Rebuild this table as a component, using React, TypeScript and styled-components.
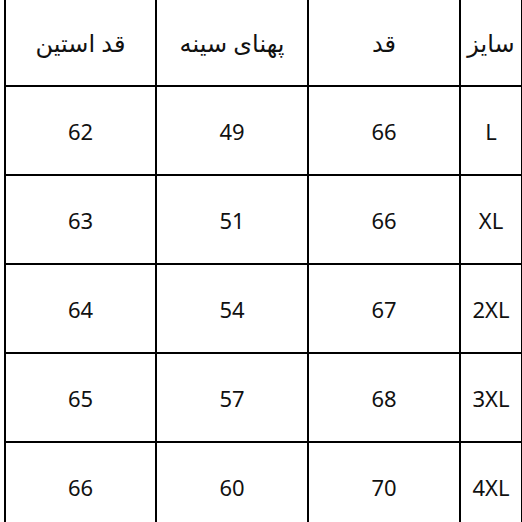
import React from 'react';
import styled, { createGlobalStyle } from 'styled-components';

const GlobalStyle = createGlobalStyle`
  html, body {
    margin: 0;
    padding: 0;
    background: #ffffff;
    overflow: hidden;
  }
`;

const Page = styled.div`
  width: 522px;
  height: 522px;
  overflow: hidden;
  background: #ffffff;
`;

const Table = styled.div`
  direction: rtl;
  display: grid;
  grid-template-columns: 60px 150px 150px 149px;
  grid-auto-rows: 87px;
  gap: 2px;
  padding: 2px;
  margin: -4px 0 0 4px;
  width: max-content;
  background: #000000;
`;

const Cell = styled.div<{ $head?: boolean }>`
  display: flex;
  align-items: center;
  justify-content: center;
  background: #ffffff;
  color: #111111;
  font-family: 'Noto Sans', 'DejaVu Sans', sans-serif;
  font-size: ${(p) => (p.$head ? '24px' : '22px')};
  padding-top: ${(p) => (p.$head ? '2px' : '0')};
  white-space: nowrap;
`;

const headers = ['سایز', 'قد', 'پهنای سینه', 'قد استین'];

const rows = [
  ['L', '66', '49', '62'],
  ['XL', '66', '51', '63'],
  ['2XL', '67', '54', '64'],
  ['3XL', '68', '57', '65'],
  ['4XL', '70', '60', '66'],
];

const App: React.FC = () => {
  return (
    <Page>
      <GlobalStyle />
      <Table>
        {headers.map((h) => (
          <Cell key={h} $head>
            {h}
          </Cell>
        ))}
        {rows.map((r) =>
          r.map((v, i) => (
            <Cell key={r[0] + i} dir="ltr">
              {v}
            </Cell>
          ))
        )}
      </Table>
    </Page>
  );
};

export default App;
